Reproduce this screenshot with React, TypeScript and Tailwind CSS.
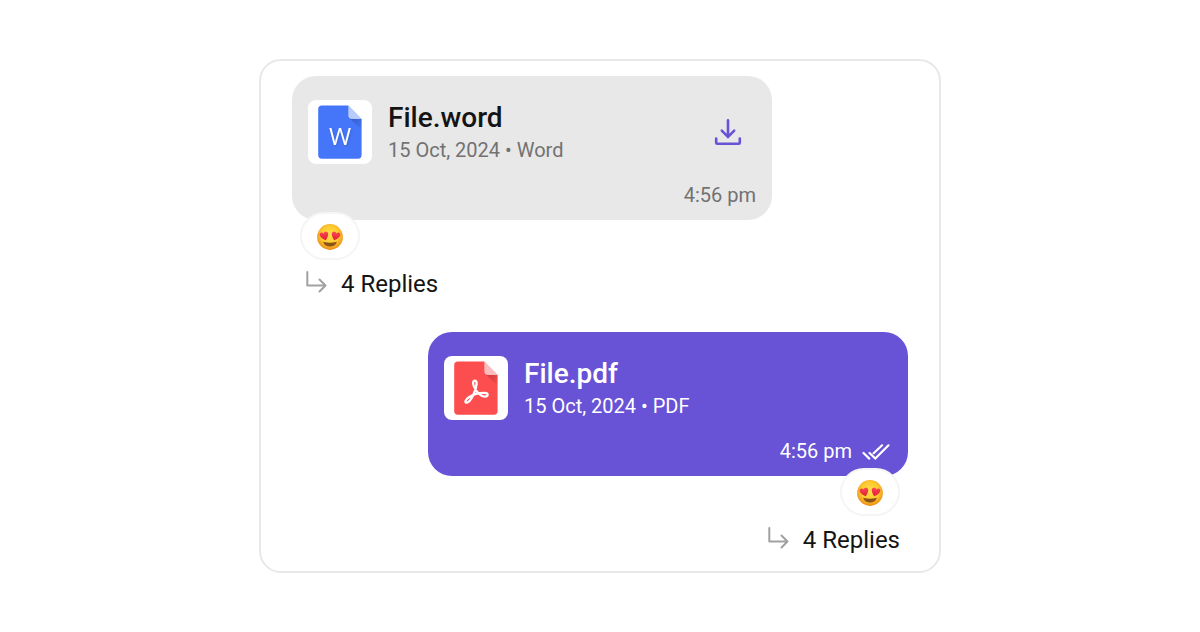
import type { ReactNode } from "react";

function FilePage({ color, children }: { color: string; children: ReactNode }) {
  return (
    <div className="size-16 shrink-0 rounded-lg bg-white">
      <svg viewBox="0 0 64 64" className="size-16" aria-hidden="true">
        <defs>
          <linearGradient id={`fold-${color.slice(1)}`} x1="0" y1="0" x2="1" y2="1">
            <stop offset="0" stopColor="#000" stopOpacity="0.22" />
            <stop offset="1" stopColor="#000" stopOpacity="0" />
          </linearGradient>
        </defs>
        <path
          d="M13.5 5.6H40.3L53.6 18.9V55a3.7 3.7 0 0 1-3.7 3.7H13.9a3.7 3.7 0 0 1-3.7-3.7V9.3a3.7 3.7 0 0 1 3.7-3.7z"
          fill={color}
        />
        <path d="M41.3 17.8L53.6 30.2V18.9z" fill={`url(#fold-${color.slice(1)})`} />
        <path d="M40.3 5.6L53.6 18.9H44a3.7 3.7 0 0 1-3.700-3.700z" fill="#fff" fillOpacity="0.62" />
        {children}
      </svg>
    </div>
  );
}

function WordIcon() {
  return (
    <FilePage color="#4576f9">
      <text
        x="32"
        y="45"
        textAnchor="middle"
        className="fill-white font-['Open_Sans',sans-serif] text-[24px] drop-shadow-[1px_1px_1px_rgba(0,0,0,0.15)]"
      >
        W
      </text>
    </FilePage>
  );
}

function PdfIcon() {
  return (
    <FilePage color="#fc4d4f">
      <path
        d="M30.800 24.600c-1.900 0-2.200 2.900-.9 5.800 2 4.700 6.300 10 10.900 10.200 3.700 0 3.900-3.600-.2-3.700-5.800-.1-11.300 1.500-15.700 4.300-4.200 2.600-4.200 5.600-2.100 5.400 4-.6 9.100-11.500 9.800-18.500.2-2.400-.4-3.500-1.800-3.500z"
        fill="none"
        stroke="#fff"
        strokeWidth="2.300"
        strokeLinejoin="round"
      />
    </FilePage>
  );
}

function DownloadIcon() {
  return (
    <svg viewBox="0 0 32 32" className="size-8" fill="none" stroke="#6852d6" strokeWidth="2.6" strokeLinecap="round" strokeLinejoin="round" aria-hidden="true">
      <path d="M16 4.300V20.500M9.800 14.700L16 20.900l6.200-6.200" strokeLinejoin="miter" />
      <path d="M4.200 22.500v4.300a1 1 0 0 0 1 1h21.600a1 1 0 0 0 1-1v-4.300" />
    </svg>
  );
}

function ReadIcon() {
  return (
    <svg viewBox="0 0 32 32" className="size-8" fill="none" stroke="#fff" strokeWidth="2.2" strokeLinecap="round" strokeLinejoin="miter" role="img" aria-label="Read">
      <path d="M3.500 17l5.800 5.600M13.600 17.200l8.500-7.900M9.500 17l5.800 5.500L28.500 9.300" />
    </svg>
  );
}

function ReplyIcon() {
  return (
    <svg viewBox="0 0 24 24" className="mb-[2px] size-6" fill="none" stroke="#a1a1a1" strokeWidth="2" strokeLinecap="round" strokeLinejoin="round" aria-hidden="true">
      <path d="M3.300 1v13.500h18M15.500 8.500l6 6-6 6" />
    </svg>
  );
}

function HeartEyes() {
  return (
    <svg viewBox="0 0 26 26" className="size-[26px]" role="img" aria-label="Heart eyes">
      <defs>
        <radialGradient id="face" cx="0.5" cy="0.42" r="0.58">
          <stop offset="0" stopColor="#ffe04a" />
          <stop offset="0.6" stopColor="#fdc92f" />
          <stop offset="1" stopColor="#ea8c17" />
        </radialGradient>
        <linearGradient id="heart" x1="0" y1="0" x2="0" y2="1">
          <stop offset="0" stopColor="#fb4652" />
          <stop offset="1" stopColor="#e01f35" />
        </linearGradient>
      </defs>
      <circle cx="13" cy="13" r="12.900" fill="url(#face)" />
      <path d="M7.100 17.900c3.600 1 8.200 1 11.800 0 .6-.2.9.2.7.7-.9 2.500-3.500 3.900-6.600 3.900s-5.700-1.400-6.600-3.900c-.2-.5.1-.9.7-.7z" fill="#8a5418" />
      <path d="M8.700 16.200C5.900 15 3 13.200 2.600 10.800c-.3-2.200 2.500-3.300 3.900-1.400.9-2.300 4.400-2 4.700.3.200 2.200-1 4.600-2.500 6.500z" fill="url(#heart)" />
      <path d="M17.300 16.200c2.800-1.200 5.700-3 6.100-5.400.3-2.200-2.500-3.300-3.900-1.400-.9-2.300-4.400-2-4.700.3-.2 2.200 1 4.600 2.500 6.500z" fill="url(#heart)" />
    </svg>
  );
}

type MessageProps = {
  name: string;
  detail: string;
  icon: ReactNode;
  outgoing?: boolean;
};

function FileMessage({ name, detail, icon, outgoing = false }: MessageProps) {
  return (
    <article className={`flex w-full max-w-[480px] flex-col ${outgoing ? "items-end self-end" : "items-start"}`}>
      <div className={`w-full rounded-3xl px-4 pt-6 pb-2 ${outgoing ? "bg-[#6852d6] text-white" : "bg-[#e8e8e8] text-[#141414]"}`}>
        <div className="flex gap-4">
          {icon}
          <div className="min-w-0 flex-1">
            <h2 className="text-[28px] leading-9 font-medium">{name}</h2>
            <p className={`mt-0.5 text-xl leading-6 ${outgoing ? "text-white" : "text-[#727272]"}`}>{detail}</p>
          </div>
          {!outgoing && (
            <button type="button" aria-label={`Download ${name}`} className="mr-3 size-8 self-center">
              <DownloadIcon />
            </button>
          )}
        </div>
        <div className="mt-4 flex h-8 items-center justify-end gap-2">
          <time className={`pb-[2px] text-xl leading-6 ${outgoing ? "text-white" : "text-[#727272]"}`}>4:56 pm</time>
          {outgoing && <ReadIcon />}
        </div>
      </div>
      <button type="button" aria-label="Reaction" className="relative mx-2 -mt-2 flex h-12 w-15 items-center justify-center rounded-full border-2 border-[#f5f5f5] bg-white pt-[2px]">
        <HeartEyes />
      </button>
      <button type="button" className={`mt-2 flex items-center gap-[13px] text-2xl leading-8 text-[#141414] ${outgoing ? "mr-2" : "ml-3"}`}>
        <ReplyIcon />
        4 Replies
      </button>
    </article>
  );
}

export default function App() {
  return (
    <main className="flex min-h-screen items-center justify-center bg-white font-[Roboto,sans-serif]">
      <section className="flex w-full max-w-[682px] flex-col gap-8 rounded-[22px] border-2 border-[#e8e8e8] px-[31px] py-[15px]">
        <FileMessage name="File.word" detail="15 Oct, 2024 • Word" icon={<WordIcon />} />
        <FileMessage name="File.pdf" detail="15 Oct, 2024 • PDF" icon={<PdfIcon />} outgoing />
      </section>
    </main>
  );
}
